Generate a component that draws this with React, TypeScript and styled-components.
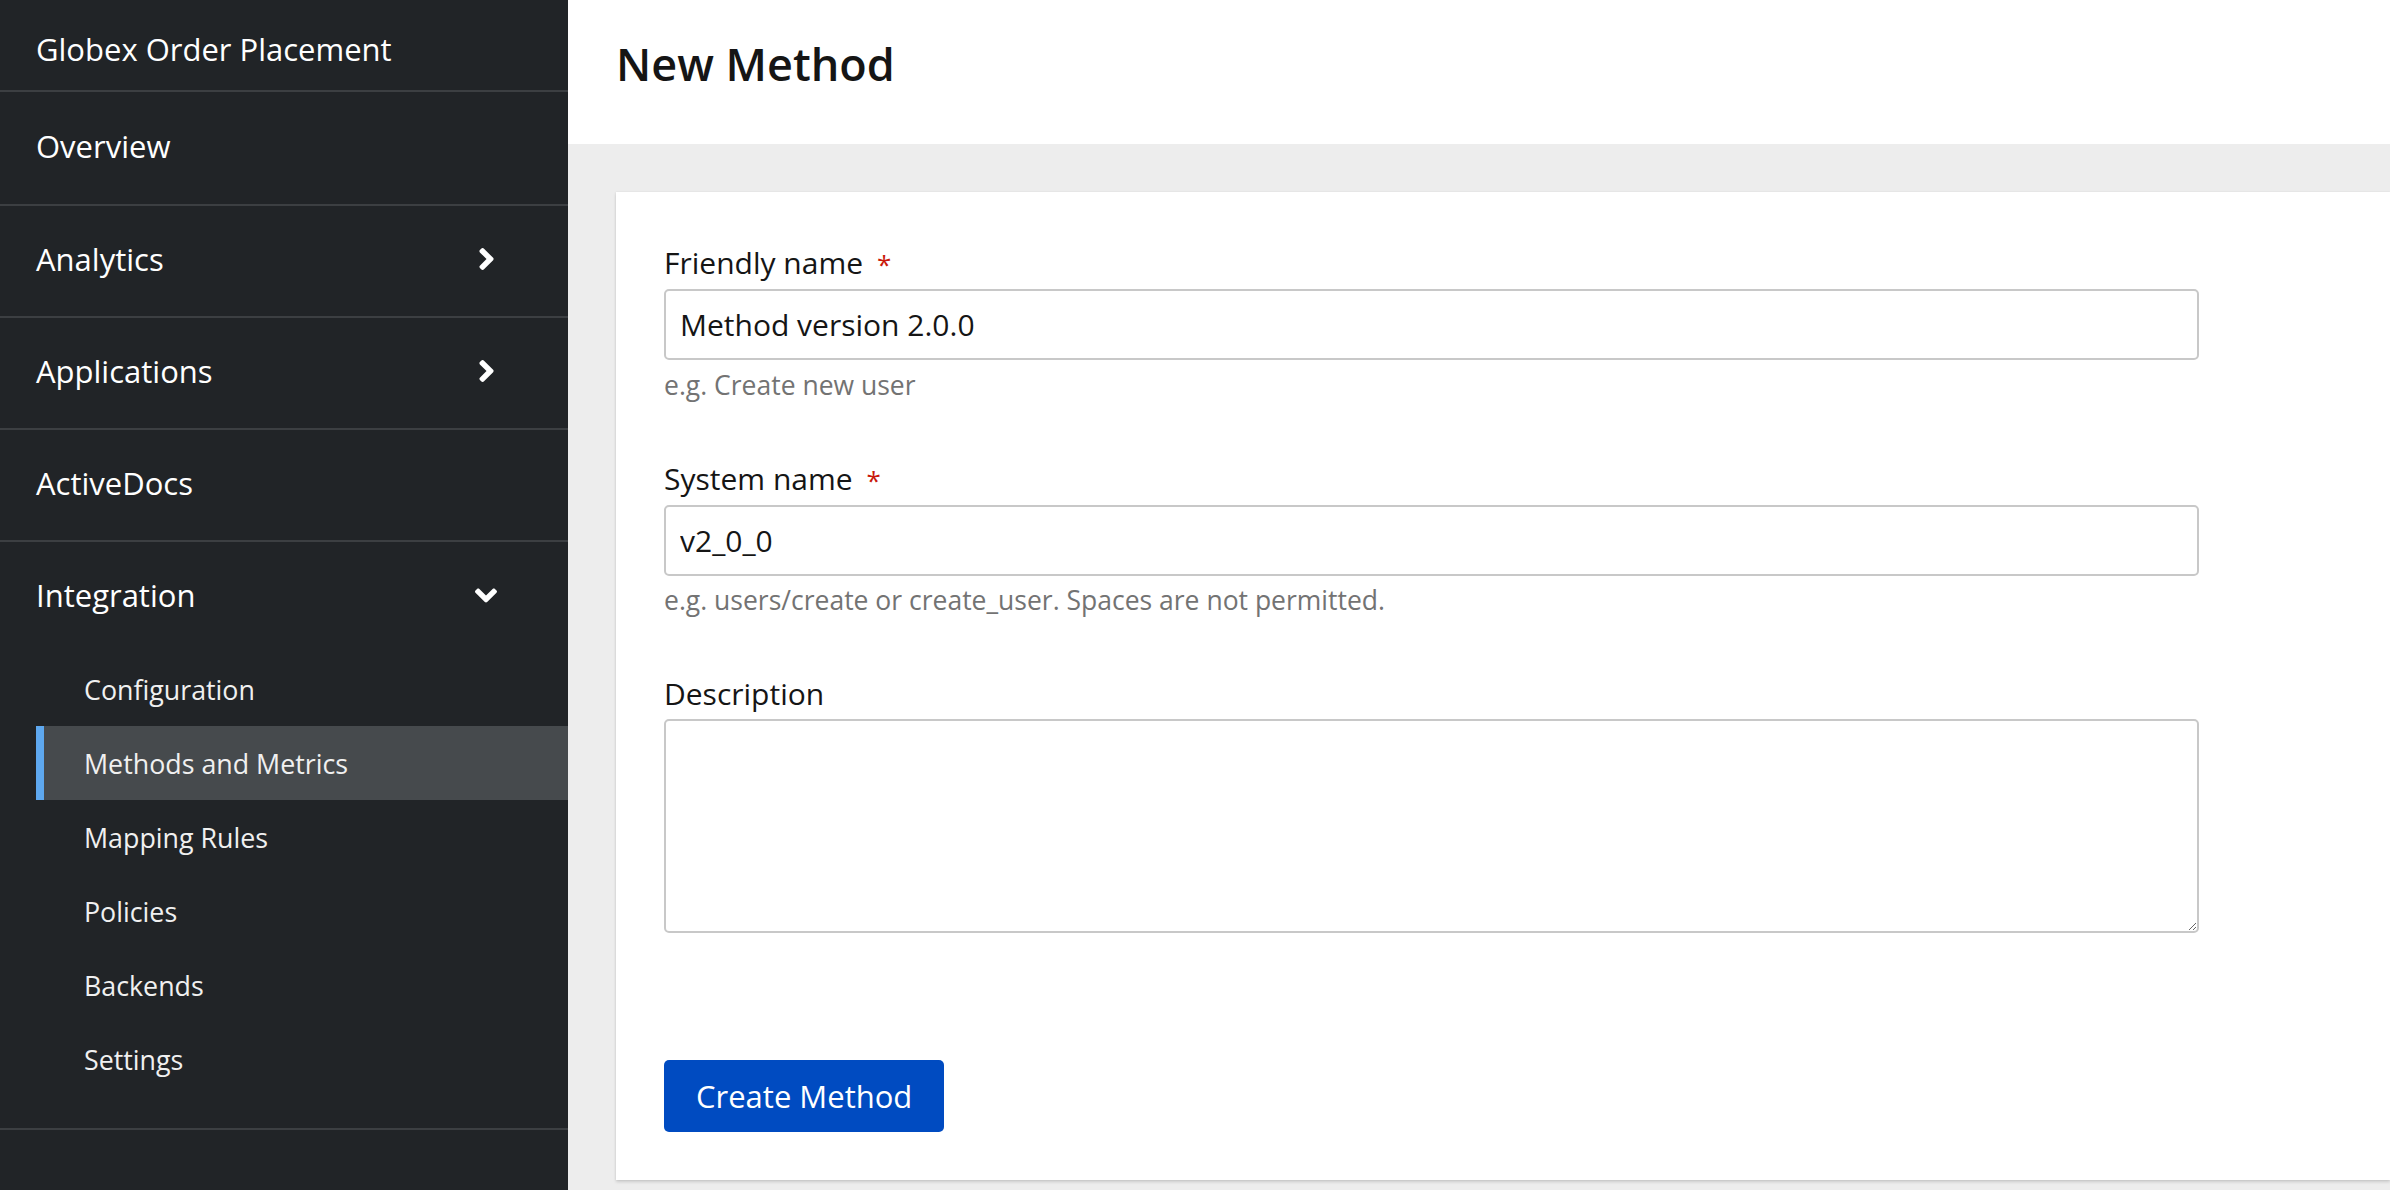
import React from "react";
import styled, { createGlobalStyle } from "styled-components";

const GlobalStyle = createGlobalStyle`
  html, body {
    margin: 0;
    padding: 0;
    height: 100%;
    overflow: hidden;
  }
  body {
    font-family: "Open Sans", "Noto Sans", Arial, sans-serif;
    background: #ededed;
  }
  #root { height: 100%; }
  * { box-sizing: border-box; }
`;

const Layout = styled.div`
  display: grid;
  grid-template-columns: 568px 1fr;
  height: 1190px;
  width: 2390px;
`;

const Sidebar = styled.nav`
  background: #212427;
  display: flex;
  flex-direction: column;
  color: #ffffff;
`;

const SidebarTitle = styled.div`
  height: 92px;
  padding: 8px 0 0 36px;
  display: flex;
  align-items: center;
  font-size: 31px;
  border-bottom: 2px solid #3c3f42;
`;

const NavSection = styled.div`
  border-bottom: 2px solid #3c3f42;
`;

const NavRow = styled.div<{ $h: number }>`
  height: ${(p) => p.$h}px;
  display: flex;
  align-items: center;
  justify-content: space-between;
  padding: 0 71px 4px 36px;
  font-size: 31px;
  color: #ffffff;
`;

const ChevronBox = styled.span`
  width: 22px;
  display: flex;
  justify-content: center;
  align-items: center;
`;

const SubList = styled.ul`
  list-style: none;
  margin: 0 0 32px 36px;
  padding: 0;
`;

const SubItem = styled.li<{ $active?: boolean }>`
  height: 74px;
  display: flex;
  align-items: center;
  padding-left: ${(p) => (p.$active ? "40px" : "48px")};
  font-size: 26.8px;
  color: #f0f0f0;
  background: ${(p) => (p.$active ? "#464a4d" : "transparent")};
  border-left: ${(p) => (p.$active ? "8px solid #5ea8ef" : "none")};
`;

const Main = styled.main`
  display: flex;
  flex-direction: column;
  background: #ededed;
  min-width: 0;
`;

const PageHeader = styled.header`
  height: 144px;
  background: #ffffff;
  padding: 34px 0 0 48px;
`;

const PageTitle = styled.h1`
  margin: 0;
  font-size: 45px;
  line-height: 60px;
  font-weight: 600;
  color: #151515;
`;

const Content = styled.section`
  padding: 48px 0 0 48px;
  display: flex;
`;

const Card = styled.form`
  flex: 1;
  background: #ffffff;
  box-shadow: 0 2px 3px rgba(3, 3, 3, 0.14), 0 0 2px rgba(3, 3, 3, 0.08);
  padding: 49px 48px 48px 48px;
  display: flex;
  flex-direction: column;
`;

const Group = styled.div<{ $gap: number }>`
  display: flex;
  flex-direction: column;
  max-width: 1535px;
  margin-bottom: ${(p) => p.$gap}px;
`;

const Label = styled.label`
  font-size: 30px;
  line-height: 44px;
  color: #151515;
  margin-bottom: 3px;
`;

const Required = styled.span`
  color: #c9190b;
  margin-left: 14px;
  font-size: 26px;
`;

const TextInput = styled.input`
  height: 71px;
  border: 2px solid #c8c8c8;
  border-radius: 5px;
  padding: 0 14px;
  font-family: inherit;
  font-size: 30px;
  color: #151515;
  background: #ffffff;
  outline: none;
`;

const TextArea = styled.textarea`
  height: 214px;
  border: 2px solid #c8c8c8;
  border-radius: 5px;
  padding: 10px 14px;
  font-family: inherit;
  font-size: 30px;
  resize: vertical;
  background: #ffffff;
  outline: none;
`;

const Helper = styled.div<{ $top: number }>`
  font-size: 26.5px;
  line-height: 40px;
  color: #737373;
  margin-top: ${(p) => p.$top}px;
`;

const Actions = styled.div`
  display: flex;
`;

const PrimaryButton = styled.button`
  height: 72px;
  padding: 0 32px;
  background: #004bc1;
  color: #ffffff;
  border: none;
  border-radius: 5px;
  font-family: inherit;
  font-size: 31px;
  cursor: pointer;
`;

const AngleRight = () => (
  <svg width="15" height="22" viewBox="24 96 208 320" fill="#ffffff" aria-hidden="true">
    <path d="M224.3 273l-136 136c-9.4 9.4-24.6 9.4-33.9 0l-22.6-22.6c-9.4-9.4-9.4-24.6 0-33.9l96.4-96.4-96.4-96.4c-9.4-9.4-9.4-24.6 0-33.9L54.3 103c9.4-9.4 24.6-9.4 33.9 0l136 136c9.5 9.4 9.5 24.6.1 34z" />
  </svg>
);

const AngleDown = () => (
  <svg width="22" height="15" viewBox="0 152 320 208" fill="#ffffff" aria-hidden="true">
    <path d="M143 352.3L7 216.3c-9.4-9.4-9.4-24.6 0-33.9l22.6-22.6c9.4-9.4 24.6-9.4 33.9 0l96.4 96.4 96.4-96.4c9.4-9.4 24.6-9.4 33.9 0l22.6 22.6c9.4 9.4 9.4 24.6 0 33.9l-136 136c-9.2 9.4-24.4 9.4-33.8 0z" />
  </svg>
);

const subItems = [
  "Configuration",
  "Methods and Metrics",
  "Mapping Rules",
  "Policies",
  "Backends",
  "Settings",
];

export default function App() {
  return (
    <>
      <GlobalStyle />
      <Layout>
        <Sidebar>
          <SidebarTitle>Globex Order Placement</SidebarTitle>
          <NavSection>
            <NavRow $h={112}>Overview</NavRow>
          </NavSection>
          <NavSection>
            <NavRow $h={110}>
              Analytics
              <ChevronBox>
                <AngleRight />
              </ChevronBox>
            </NavRow>
          </NavSection>
          <NavSection>
            <NavRow $h={110}>
              Applications
              <ChevronBox>
                <AngleRight />
              </ChevronBox>
            </NavRow>
          </NavSection>
          <NavSection>
            <NavRow $h={110}>ActiveDocs</NavRow>
          </NavSection>
          <NavSection>
            <NavRow $h={110}>
              Integration
              <ChevronBox>
                <AngleDown />
              </ChevronBox>
            </NavRow>
            <SubList>
              {subItems.map((s) => (
                <SubItem key={s} $active={s === "Methods and Metrics"}>
                  {s}
                </SubItem>
              ))}
            </SubList>
          </NavSection>
        </Sidebar>
        <Main>
          <PageHeader>
            <PageTitle>New Method</PageTitle>
          </PageHeader>
          <Content>
            <Card onSubmit={(e) => e.preventDefault()}>
              <Group $gap={52}>
                <Label htmlFor="friendly">
                  Friendly name<Required>*</Required>
                </Label>
                <TextInput id="friendly" defaultValue="Method version 2.0.0" />
                <Helper $top={5}>e.g. Create new user</Helper>
              </Group>
              <Group $gap={52}>
                <Label htmlFor="system">
                  System name<Required>*</Required>
                </Label>
                <TextInput id="system" defaultValue="v2_0_0" />
                <Helper $top={4}>
                  e.g. users/create or create_user. Spaces are not permitted.
                </Helper>
              </Group>
              <Group $gap={127}>
                <Label htmlFor="description">Description</Label>
                <TextArea id="description" />
              </Group>
              <Actions>
                <PrimaryButton type="submit">Create Method</PrimaryButton>
              </Actions>
            </Card>
          </Content>
        </Main>
      </Layout>
    </>
  );
}
